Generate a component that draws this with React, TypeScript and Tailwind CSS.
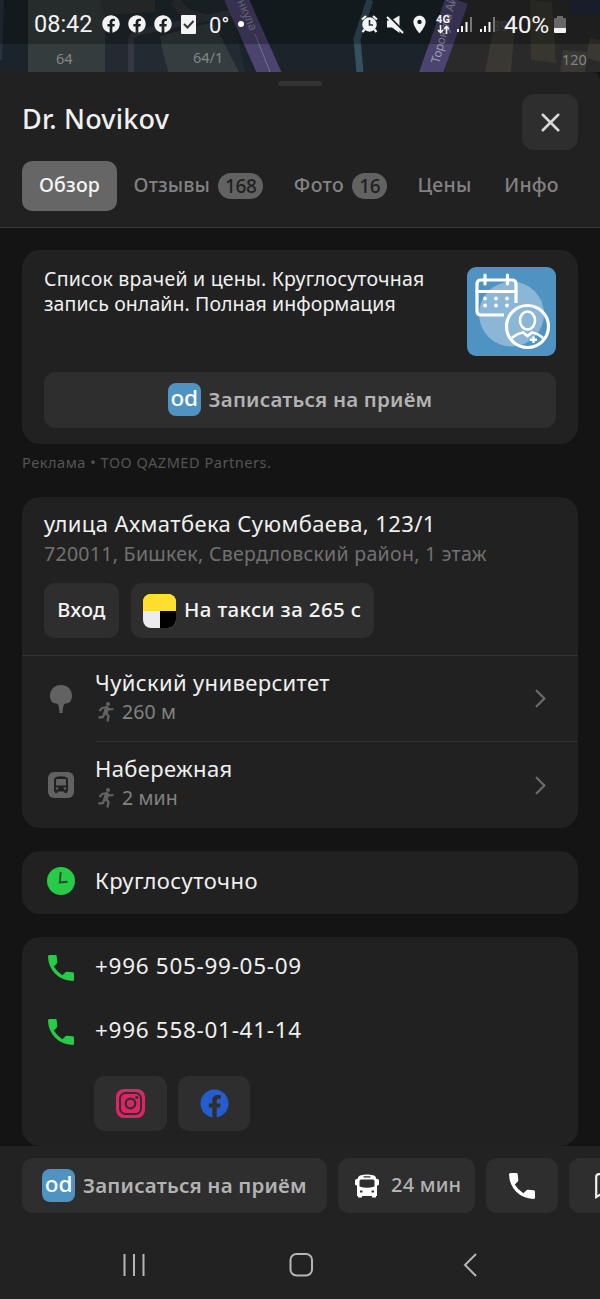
import type { ReactNode } from 'react';
import clsx from 'clsx';
import { ChevronRight, X } from 'lucide-react';
import { FaFacebook } from 'react-icons/fa';
import { MdLocationOn } from 'react-icons/md';

const tabs = [
  { label: 'Обзор', width: 'w-[95px]', tracking: 'tracking-[0.2px]', active: true },
  { label: 'Отзывы', count: 168, width: 'w-[163px]', tracking: 'tracking-[0.1px]' },
  { label: 'Фото', count: 16, width: 'w-[121px]', tracking: 'tracking-[0.4px]' },
  { label: 'Цены', width: 'w-[87px]', tracking: 'tracking-[0.2px]' },
  { label: 'Инфо', width: 'w-[87px]', tracking: 'tracking-[0.2px]' },
];

const stops = [
  { name: 'Чуйский университет', distance: '260 м', icon: 'tree' },
  { name: 'Набережная', distance: '2 мин', icon: 'bus' },
];

const phones = ['+996 505-99-05-09', '+996 558-01-41-14'];

function MapStrip() {
  return (
    <svg className="absolute inset-0" width="600" height="72" viewBox="0 0 600 72">
      <rect width="600" height="96" fill="#1b242a" />
      <path d="M28 0H105V96H28Z" fill="#353c3d" />
      <path d="M105 0H230L250 96H105Z" fill="#222b31" />
      <path d="M111 0H155V12L101 15V0Z" fill="#303536" />
      <path d="M160 36L213 22L239 72V96H177Q163 60 160 36Z" fill="#343d3f" />
      <path d="M131 96V42Q131 34 140 32L235 12" fill="none" stroke="#353743" strokeWidth="6" />
      <path d="M175 0Q185 18 205 18" fill="none" stroke="#303338" strokeWidth="10" />
      <path d="M2 0L0 60" stroke="#27333e" strokeWidth="4" />
      <path d="M235 -4L276 88" stroke="#4c4470" strokeWidth="23" />
      <path d="M255 34L270 72" stroke="#77728b" strokeWidth="1" />
      <path d="M370 0L357 39L360 72" fill="none" stroke="#35505e" strokeWidth="7" />
      <path d="M460 0H600V96H440Z" fill="#292a29" />
      <path d="M457 0L427 84" stroke="#4c4470" strokeWidth="23" />
      <path d="M495 20L515 22L511 72H485Z" fill="#393833" />
      <path d="M530 0L552 2L556 63L531 60Z" fill="#38372f" />
      <path d="M563 50L587 52L585 72H560Z" fill="#393832" />
      <path d="M590 38L600 40V62L586 58Z" fill="#393832" />
      <path d="M570 0H600V14H571Z" fill="#20283a" />
      <g fill="#838786" fontFamily="Noto Sans" fontSize="14.5">
        <text x="56" y="64">64</text>
        <text x="193" y="63">64/1</text>
        <text x="492" y="31" fill="#50514f">89</text>
        <text x="562" y="65">120</text>
        <text transform="translate(234 -5) rotate(66)" fontSize="12" fill="#8a859c">онкула</text>
        <text transform="translate(439 64) rotate(-75)" fontSize="12" letterSpacing="-0.3" fill="#a09caf">Торокула Ай</text>
      </g>
      <rect width="600" height="44" fill="#000" opacity="0.27" />
    </svg>
  );
}

function Signal({ className }: { className?: string }) {
  return (
    <svg className={className} width="16" height="17" viewBox="0 0 16 17">
      <path d="M1 13V16M5 10V16M9.5 6V16" stroke="#f4f4f4" strokeWidth="2" />
      <path d="M14 1V16" stroke="#777" strokeWidth="2" />
    </svg>
  );
}

function StatusBar() {
  return (
    <div className="relative flex h-12 items-center text-[#f3f3f3]">
      <span className="ml-[34px] w-[68px] pt-[2px] font-['Roboto'] text-[23.5px] whitespace-nowrap">08:42</span>
      <div className="flex gap-2">
        <FaFacebook size={18} />
        <FaFacebook size={18} />
        <FaFacebook size={18} />
      </div>
      <svg className="ml-[9px]" width="16" height="19" viewBox="0 0 16 19">
        <rect width="15" height="19" rx="1" fill="#f3f3f3" />
        <path d="M3 9L6.5 12.5L12.5 6" fill="none" stroke="#30373a" strokeWidth="2" />
      </svg>
      <span className="ml-[12px] w-[29px] pt-[2px] font-['Roboto'] text-[22px] whitespace-nowrap">0°</span>
      <span className="h-[6px] w-[6px] rounded-full bg-white" />
      <svg className="ml-[117px]" width="17" height="18" viewBox="0 0 17 18">
        <path d="M1 4.5L5 1M12 1L16 4.5M3.5 14.5L1.5 17M13.5 14.5L15.5 17" stroke="#f3f3f3" strokeWidth="2.2" />
        <circle cx="8.5" cy="9.5" r="7.2" fill="#f3f3f3" />
        <path d="M8.5 5V10H12" fill="none" stroke="#222b2e" strokeWidth="1.6" />
      </svg>
      <svg className="ml-[8px]" width="18" height="19" viewBox="0 0 18 19">
        <path d="M1 5.5H5L13.5 0.5V18L6 12.5H1Z" fill="#f3f3f3" />
        <path d="M2 0.5L18 16.5" stroke="#1c2528" strokeWidth="2" />
        <path d="M1 2L17 18" stroke="#f3f3f3" strokeWidth="2" />
      </svg>
      <MdLocationOn className="ml-[5px]" size={21} />
      <div className="ml-[4px] flex w-[18px] flex-col items-center font-['Roboto'] text-[11px] leading-[10px] font-bold">
        <span>4G</span>
        <svg width="13" height="9" viewBox="0 0 13 9">
          <path d="M3.5 0V7M1 5L3.5 7.5L6 5M9.5 9V2M7 4L9.5 1.5L12 4" fill="none" stroke="#f3f3f3" strokeWidth="1.6" />
        </svg>
      </div>
      <Signal className="ml-[5px]" />
      <Signal className="ml-[7px]" />
      <span className="ml-[8px] w-[48px] pt-[2px] font-['Roboto'] text-[24.5px] tracking-[-0.1px] whitespace-nowrap">40%</span>
      <svg className="ml-[2px]" width="12" height="17" viewBox="0 0 12 17">
        <path d="M3 0H9V2H11Q12 2 12 3V12H0V3Q0 2 1 2H3Z" fill="#686866" />
        <path d="M0 12H12V16Q12 17 11 17H1Q0 17 0 16Z" fill="#f3f3f3" />
      </svg>
    </div>
  );
}

function OdLogo() {
  return (
    <span className="flex h-[33px] w-[33px] shrink-0 justify-center rounded-[8px] bg-[#4f93c2] text-[22.5px] leading-[29px] font-medium tracking-[-0.2px] text-white">
      od
    </span>
  );
}

function AdPicture() {
  return (
    <svg className="mt-[0.5px] shrink-0" width="89" height="89" viewBox="0 0 89 89" fill="none" stroke="#fff">
      <rect width="89" height="89" rx="9" fill="#4f93c2" stroke="none" />
      <circle cx="44.5" cy="47" r="32.5" fill="#8bb6d5" stroke="none" />
      <path d="M37 48H14Q10 48 10 44V17Q10 13 14 13H45Q49 13 49 17V36" strokeWidth="3.2" />
      <path d="M10 24.5H49M18 8V17M40.5 8V17" strokeWidth="3.2" strokeLinecap="round" />
      <path d="M18 31.5h.01M29 31.5h.01M40 31.5h.01M18 38.5h.01M29 38.5h.01M40 38.5h.01" strokeWidth="3.8" strokeLinecap="round" />
      <circle cx="60.5" cy="59.5" r="21" strokeWidth="3.2" />
      <ellipse cx="60.5" cy="53.5" rx="7.5" ry="9" strokeWidth="2.6" />
      <path d="M45 71Q49 67 56 65.5L60.5 69L65 65.5Q72 67 76 71" strokeWidth="2.8" />
      <path d="M66.5 69.5V76M63 72.7H70" strokeWidth="2.4" />
    </svg>
  );
}

function PhoneIcon() {
  return (
    <svg width="26" height="26" viewBox="0 0 26 26" fill="currentColor">
      <path d="M1.5 0H7.5Q8.600 0 8.700 1.200L9.300 7Q9.400 8 8.600 8.800L5.800 11.600Q9 17.200 14.400 20.200L17.200 17.400Q18 16.600 19 16.700L24.800 17.300Q26 17.500 26 18.600V24.500Q26 26 24.500 26Q14 25.500 7.200 18.800Q0.500 12 0 1.500Q0 0 1.500 0Z" />
    </svg>
  );
}

function WalkIcon() {
  return (
    <svg className="mr-[8px] ml-[3px]" width="16" height="20" viewBox="0 0 16 20" fill="none" stroke="#626262" strokeLinejoin="round">
      <circle cx="10" cy="2" r="2" fill="#626262" stroke="none" />
      <path d="M9 5.500L7.500 11.5" strokeWidth="4.500" />
      <path d="M1.5 9L4 6L9 5L11.5 7.5L15.5 7" strokeWidth="2.2" />
      <path d="M8 11L10.5 14L9.5 19.5M6.5 11L5 15L0.5 15.5" strokeWidth="2.4" />
    </svg>
  );
}

function TreeIcon() {
  return (
    <svg width="22" height="28" viewBox="0 0 22 28">
      <path d="M11 0C17.5 0 22 4.5 22 11C22 15.5 19.5 18.5 16 18.5C13.8 18.5 13 20.5 12.5 28H9.5C9 20.5 8.2 18.5 6 18.5C2.5 18.5 0 15.5 0 11C0 4.5 4.5 0 11 0Z" fill="#626262" />
    </svg>
  );
}

function StopIcon() {
  return (
    <svg width="26" height="26" viewBox="0 0 26 26">
      <rect width="26" height="26" rx="6" fill="#626262" />
      <path d="M8 5Q13 3.5 18 5Q20 5.5 20 8V19.5H19V21H16.5V19.5H9.5V21H7V19.5H6V8Q6 5.5 8 5Z" fill="#212121" />
      <path d="M8 8Q8 7 9 7H17Q18 7 18 8V13.5H8Z" fill="#626262" />
      <circle cx="9" cy="16.5" r="1.2" fill="#626262" />
      <circle cx="17" cy="16.5" r="1.2" fill="#626262" />
    </svg>
  );
}

function BusIcon() {
  return (
    <svg width="24" height="24" viewBox="0 0 24 24">
      <path fillRule="evenodd" d="M5 1.5Q12 -0.7 19 1.5Q21 2.2 21.5 5H22.5Q24 5 24 7V10Q24 11.5 22 11.5V22H21V23.5H17V22H7V23.5H3V22H2V11.5Q0 11.5 0 10V7Q0 5 1.5 5H2.5Q3 2.2 5 1.5ZM8.5 2.2V3.4H15.5V2.2ZM4.5 7V12.5Q12 15 19.5 12.5V7Q19.5 5.5 18 5.5H6Q4.5 5.5 4.5 7ZM5 16.5V18.5H7.5V16.5ZM16.5 16.5V18.5H19V16.5Z" fill="#fff" />
    </svg>
  );
}

function ClockIcon() {
  return (
    <svg width="28" height="28" viewBox="0 0 28 28">
      <circle cx="14" cy="14" r="14" fill="#27cb48" />
      <path d="M13.7 5L12.8 15.5L20.5 14.8" fill="none" stroke="#1d4a27" strokeWidth="1.9" />
    </svg>
  );
}

function InstagramIcon() {
  return (
    <svg width="29" height="29" viewBox="0 0 29 29">
      <rect width="29" height="29" rx="8" fill="#db2567" />
      <rect x="4" y="4" width="21" height="21" rx="5.5" fill="none" stroke="#2e2e2e" strokeWidth="1.9" />
      <circle cx="14.5" cy="14.5" r="4.8" fill="none" stroke="#2e2e2e" strokeWidth="2.2" />
      <circle cx="20.7" cy="8.4" r="1.5" fill="#2e2e2e" />
    </svg>
  );
}

function Card({ className, children }: { className?: string; children: ReactNode }) {
  return <section className={clsx('mx-[22px] rounded-[18px] bg-[#212121]', className)}>{children}</section>;
}

export default function App() {
  return (
    <div className="relative flex h-[1299px] w-[600px] flex-col overflow-hidden bg-[#141414] font-['Noto_Sans',sans-serif] text-[#f0f0f0]">
      <MapStrip />
      <StatusBar />

      {/* Sheet header */}
      <header className="relative mt-6 h-[156px] shrink-0 rounded-tr-[8px] border-b border-[#383838] bg-[#212121]">
        <div className="flex h-[22px] justify-center pt-[9px]">
          <span className="h-[5px] w-[44px] rounded-full bg-[#333]" />
        </div>
        <div className="flex items-center justify-between pr-[22px] pl-[22px]">
          <h1 className="pb-[6px] text-[27px] leading-[50px] font-medium tracking-[0.2px] whitespace-nowrap">Dr. Novikov</h1>
          <button className="flex h-[56px] w-[56px] items-center justify-center rounded-[12px] bg-[#2e2e2e] text-[#d8d8d8]">
            <X size={31} strokeWidth={2} />
          </button>
        </div>
        <nav className="mt-[11px] ml-[22px] flex text-[19.5px] font-medium text-[#828282]">
          {tabs.map((tab) => (
            <button
              key={tab.label}
              className={clsx(
                'flex h-[50px] shrink-0 items-center justify-center rounded-[10px] pb-[2px] whitespace-nowrap',
                tab.width,
                tab.tracking,
                tab.active && 'bg-[#666] text-[#f5f5f5]'
              )}
            >
              {tab.label}
              {tab.count && (
                <span className="mt-px ml-[8px] rounded-full bg-[#626262] px-[7px] text-[19px] leading-[26px] tracking-[-0.4px] text-[#202020]">
                  {tab.count}
                </span>
              )}
            </button>
          ))}
        </nav>
      </header>

      {/* Ad */}
      <Card className="mt-[22px] h-[194px] shrink-0 px-[22px] pt-[16px]">
        <div className="flex h-[106px] justify-between">
          <p className="text-[19.5px] leading-[25px] whitespace-nowrap">
            <span className="tracking-[0.22px]">Список врачей и цены. Круглосуточная</span>
            <br />
            <span className="tracking-[0.08px]">запись онлайн. Полная информация</span>
          </p>
          <AdPicture />
        </div>
        <button className="flex h-[56px] w-full items-center justify-center gap-[8px] rounded-[12px] bg-[#2e2e2e] pb-px text-[20.5px] font-semibold tracking-[0.2px] whitespace-nowrap text-[#b3b3b3]">
          <OdLogo />
          Записаться на приём
        </button>
      </Card>
      <p className="mt-[7px] ml-[22px] h-[46px] shrink-0 text-[14.5px] leading-[22px] tracking-[0.55px] text-[#555]">Реклама • ТОО QAZMED Partners.</p>

      {/* Address and nearest stops */}
      <Card className="h-[331px] shrink-0">
        <div className="h-[159px] border-b border-[#333] px-[22px] pt-[11px]">
          <p className="text-[22px] leading-[30px] tracking-[0.4px] whitespace-nowrap">улица Ахматбека Суюмбаева, 123/1</p>
          <p className="mt-px text-[19.5px] leading-[29px] tracking-[0.3px] whitespace-nowrap text-[#717171]">720011, Бишкек, Свердловский район, 1 этаж</p>
          <div className="mt-[15px] flex gap-3 text-[20px] font-medium whitespace-nowrap text-[#f5f5f5]">
            <button className="h-[55px] w-[75px] rounded-[11px] bg-[#2e2e2e] pb-[2px] tracking-[0.3px]">Вход</button>
            <button className="flex h-[55px] w-[243px] items-center gap-[8px] rounded-[11px] bg-[#2e2e2e] pl-[12px]">
              <span className="grid h-[34px] w-[33px] shrink-0 grid-cols-2 grid-rows-2 overflow-hidden rounded-[8px] bg-[#ececec]">
                <i className="col-span-2 bg-[#ffde2e]" />
                <i className="col-start-2 bg-black" />
              </span>
              <span className="pb-[2px] text-[20.5px] tracking-[0.35px]">На такси за 265 с</span>
            </button>
          </div>
        </div>
        {stops.map((stop, i) => (
          <div key={stop.name} className="flex h-[86px] items-center">
            <div className="flex w-[73px] shrink-0 justify-center pl-[4px]">{stop.icon === 'tree' ? <TreeIcon /> : <StopIcon />}</div>
            <div className={clsx('flex h-full flex-1 items-center justify-between pr-[22px]', i === 0 && 'border-b border-[#2f2f2f]')}>
              <div className="pb-[4px]">
                <p className="text-[22px] leading-[29px] tracking-[0.35px]">{stop.name}</p>
                <p className="flex items-center pt-px text-[19.5px] leading-[28px] tracking-[0.1px] text-[#828282]">
                  <WalkIcon />
                  {stop.distance}
                </p>
              </div>
              <ChevronRight size={31} strokeWidth={1.8} className="text-[#6a6a6a]" />
            </div>
          </div>
        ))}
      </Card>

      {/* Working hours */}
      <Card className="mt-[23px] flex h-[63px] shrink-0 items-center pb-[3px]">
        <div className="flex w-[73px] justify-center pl-[4px]">
          <ClockIcon />
        </div>
        <span className="pb-[1px] text-[22px] tracking-[0.45px]">Круглосуточно</span>
      </Card>

      {/* Contacts */}
      <Card className="mt-[23px] h-[209px] shrink-0">
        {phones.map((phone) => (
          <div key={phone} className="flex h-[64px] items-center pb-[3px]">
            <div className="flex w-[73px] justify-center pl-[4px] text-[#27cb48]">
              <PhoneIcon />
            </div>
            <span className="pb-[3px] text-[22.5px] tracking-[0.7px] whitespace-nowrap">{phone}</span>
          </div>
        ))}
        <div className="mt-[11px] ml-[72px] flex gap-[11px]">
          <button className="flex h-[55px] w-[73px] items-center justify-center rounded-[11px] bg-[#2e2e2e]">
            <InstagramIcon />
          </button>
          <button className="flex h-[55px] w-[72px] items-center justify-center rounded-[11px] bg-[#2e2e2e] text-[#255cce]">
            <FaFacebook size={29} />
          </button>
        </div>
      </Card>

      {/* Bottom actions */}
      <footer className="relative h-[153px] shrink-0 bg-[#222]">
        <div className="flex gap-[11px] pt-[12px] pl-[22px] text-[20px] whitespace-nowrap text-[#b3b3b3]">
          <button className="flex h-[55px] w-[305px] shrink-0 items-center gap-[8px] rounded-[11px] bg-[#2e2e2e] pb-[1px] pl-[20px] text-[20.5px] font-semibold tracking-[0.2px]">
            <OdLogo />
            Записаться на приём
          </button>
          <button className="flex h-[55px] w-[137px] shrink-0 items-center gap-[12px] rounded-[11px] bg-[#2e2e2e] pl-[17px] font-medium tracking-[0.2px]">
            <BusIcon />
            <span className="pb-[2px]">24 мин</span>
          </button>
          <button className="flex h-[55px] w-[72px] shrink-0 items-center justify-center rounded-[11px] bg-[#2e2e2e] text-white">
            <PhoneIcon />
          </button>
          <button className="flex h-[55px] w-[72px] shrink-0 items-center rounded-[11px] bg-[#2e2e2e] pl-[26px]">
            <svg width="20" height="26" viewBox="0 0 20 26">
              <path d="M1.2 24V4Q1.2 1.2 4 1.2H16Q18.8 1.2 18.8 4V24L10 19Z" fill="none" stroke="#f0f0f0" strokeWidth="2.2" />
            </svg>
          </button>
        </div>
        <div className="mt-[40px] flex h-[24px] items-center pl-[122px]">
          <svg width="24" height="24" viewBox="0 0 24 24">
            <path d="M2.5 1V23M12 1V23M21.5 1V23" stroke="#b5b5b5" strokeWidth="2" />
          </svg>
          <svg className="ml-[143px]" width="25" height="24" viewBox="0 0 25 24">
            <rect x="1.5" y="1" width="21.5" height="21.5" rx="6" fill="none" stroke="#b5b5b5" strokeWidth="2" />
          </svg>
          <svg className="ml-[149px]" width="14" height="24" viewBox="0 0 14 24">
            <path d="M13 1L2 12L13 23" fill="none" stroke="#b5b5b5" strokeWidth="2" />
          </svg>
        </div>
      </footer>
    </div>
  );
}
